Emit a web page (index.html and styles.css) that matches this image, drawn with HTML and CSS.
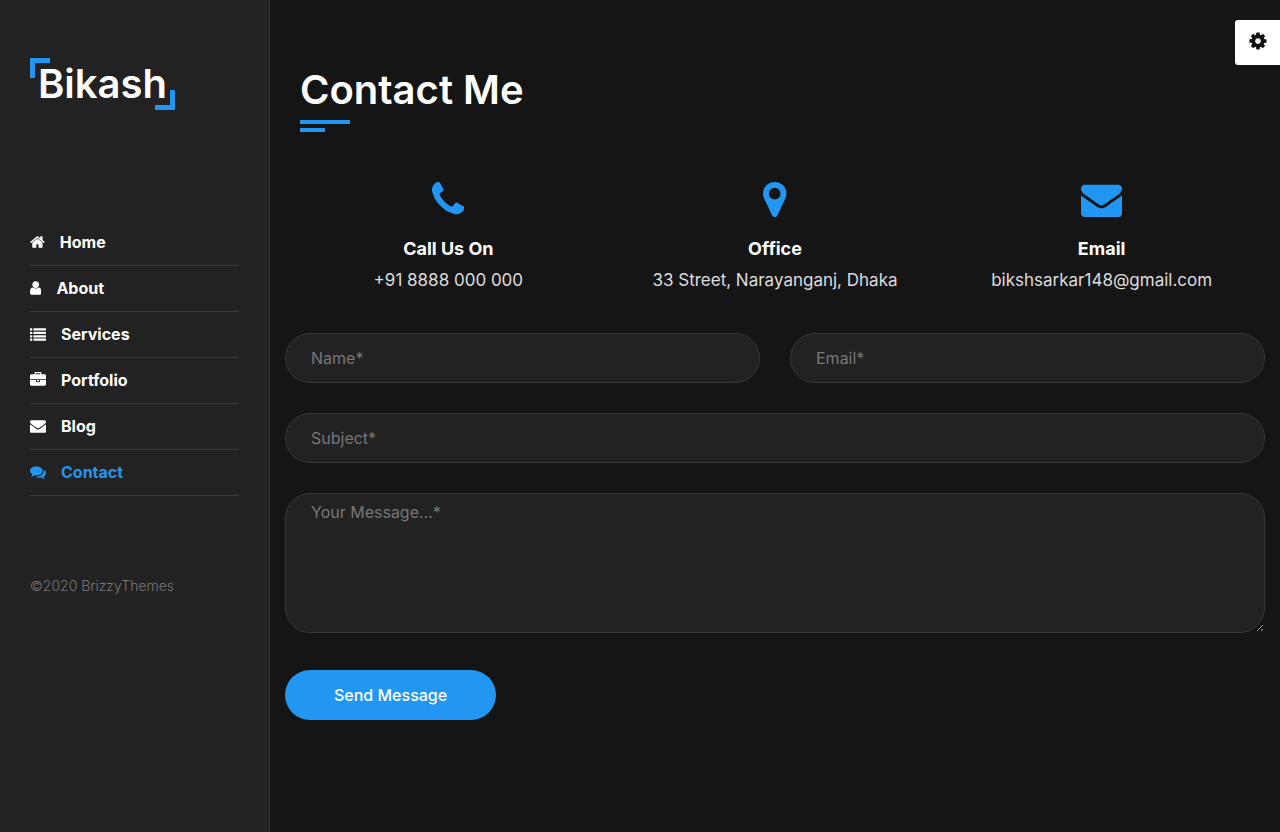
FILE: index.html
```
<!DOCTYPE html>
<html lang="en">
<head>
  <meta charset="UTF-8">
  <meta name="viewport" content="width=device-width, initial-scale=1.0">
  <title>Bikash - Contact</title>
  <link rel="stylesheet" href="styles.css">
</head>
<body>
  <aside class="sidebar">
    <a href="#home" class="logo">Bikash</a>
    <nav>
      <ul class="nav">
        <li><a href="#home"><svg viewBox="64 0 1664 1792" aria-hidden="true"><path d="M1472 992v480q0 26-19 45t-45 19h-384v-384h-256v384h-384q-26 0-45-19t-19-45v-480q0-1 .5-3t.5-3l575-474 575 474q1 2 1 6zm223-69l-62 74q-8 9-21 11h-3q-13 0-21-7l-692-577-692 577q-12 8-24 7-13-2-21-11l-62-74q-8-10-7-23.5t11-21.5l719-599q32-26 76-26t76 26l244 204v-195q0-14 9-23t23-9h192q14 0 23 9t9 23v408l219 182q10 8 11 21.5t-7 23.5z"/></svg>Home</a></li>
        <li><a href="#about"><svg viewBox="256 0 1280 1792" aria-hidden="true"><path d="M1536 1399q0 109-62.500 187t-150.500 78h-854q-88 0-150.500-78t-62.500-187q0-85 8.500-160.500t31.500-152 58.500-131 94-89 134.500-34.500q131 128 313 128t313-128q76 0 134.500 34.500t94 89 58.500 131 31.500 152 8.500 160.500zm-256-887q0 159-112.500 271.500t-271.500 112.500-271.500-112.500-112.500-271.500 112.500-271.500 271.500-112.500 271.500 112.500 112.500 271.500z"/></svg>About</a></li>
        <li><a href="#services"><svg viewBox="0 0 1792 1792" aria-hidden="true"><path d="M32 256h192q32 0 32 32v192q0 32-32 32h-192q-32 0-32-32v-192q0-32 32-32zM416 256h1344q32 0 32 32v192q0 32-32 32h-1344q-32 0-32-32v-192q0-32 32-32zM32 640h192q32 0 32 32v192q0 32-32 32h-192q-32 0-32-32v-192q0-32 32-32zM416 640h1344q32 0 32 32v192q0 32-32 32h-1344q-32 0-32-32v-192q0-32 32-32zM32 1024h192q32 0 32 32v192q0 32-32 32h-192q-32 0-32-32v-192q0-32 32-32zM416 1024h1344q32 0 32 32v192q0 32-32 32h-1344q-32 0-32-32v-192q0-32 32-32zM32 1408h192q32 0 32 32v192q0 32-32 32h-192q-32 0-32-32v-192q0-32 32-32zM416 1408h1344q32 0 32 32v192q0 32-32 32h-1344q-32 0-32-32v-192q0-32 32-32z"/></svg>Services</a></li>
        <li><a href="#portfolio"><svg viewBox="0 0 1792 1792" aria-hidden="true"><path d="M640 256h512v-128h-512v128zm1152 640v480q0 66-47 113t-113 47h-1472q-66 0-113-47t-47-113v-480h672v160q0 26 19 45t45 19h320q26 0 45-19t19-45v-160h672zm-768 0v128h-256v-128h256zm768-480v384h-1792v-384q0-66 47-113t113-47h352v-160q0-40 28-68t68-28h576q40 0 68 28t28 68v160h352q66 0 113 47t47 113z"/></svg>Portfolio</a></li>
        <li><a href="#blog"><svg viewBox="0 0 1792 1792" aria-hidden="true"><path d="M1792 710v794q0 66-47 113t-113 47h-1472q-66 0-113-47t-47-113v-794q44 49 101 87 362 246 497 345 57 42 92.500 65.500t94.500 48 110 24.500h2q51 0 110-24.500t94.500-48 92.500-65.500q170-123 498-345 57-39 100-87zm0-294q0 79-49 151t-122 123q-376 261-468 325-10 7-42.500 31t-54 38.500-52 32.500-57.500 27-50 9h-2q-23 0-50-9t-57.500-27-52-32.500-54-38.500-42.500-31q-91-64-262-182.500t-205-142.500q-62-42-117-115.500t-55-136.500q0-78 41.500-130t118.500-52h1472q65 0 112.500 47t47.500 113z"/></svg>Blog</a></li>
        <li><a href="#contact" class="active"><svg viewBox="0 0 1792 1792" aria-hidden="true"><path d="M1408 768q0 139-94 257t-256.500 186.500-353.500 68.500q-86 0-176-16-124 88-278 128-36 9-86 16h-3q-11 0-20.500-8t-11.500-21q-1-3-1-6.500t.5-6.500 2-6l2.500-5 3.500-5.500 4-5 4.500-5 4-4.500q5-6 23-25t26-29.500 22.500-29 25-38.500 20.500-44q-124-72-195-177t-71-224q0-139 94-257t256.500-186.500 353.500-68.500 353.500 68.500 256.500 186.500 94 257zm384 256q0 120-71 224.500t-195 176.500q10 24 20.500 44t25 38.500 22.500 29 26 29.500 23 25q1 1 4 4.500t4.500 5 4 5 3.500 5.500l2.500 5 2 6 .5 6.500-1 6.500q-3 14-13 22t-22 7q-50-7-86-16-154-40-278-128-90 16-176 16-271 0-472-132 58 4 88 4 161 0 309-45t264-129q125-92 192-212t67-254q0-77-23-152 129 71 204 178t75 230z"/></svg>Contact</a></li>
      </ul>
    </nav>
    <p class="copyright">©2020 BrizzyThemes</p>
  </aside>

  <main class="content" id="contact">
    <h1 class="section-title">Contact Me</h1>

    <div class="info">
      <div class="info-item">
        <svg viewBox="192 0 1408 1792" aria-hidden="true"><path d="M1600 1240q0 27-10 70.500t-21 68.500q-21 50-122 106-94 51-186 51-27 0-52.500-3.500t-57.500-12.500-47.500-14.500-55.500-20.500-49-18q-98-35-175-83-128-79-264.500-215.500t-215.500-264.500q-48-77-83-175-3-9-18-49t-20.500-55.500-14.500-47.500-12.500-57.500-3.500-52.500q0-92 51-186 56-101 106-122 25-11 68.500-21t70.500-10q14 0 21 3 18 6 53 76 11 19 30 54t35 63.500 31 53.500q3 4 17.500 25t21.500 35.500 7 28.500q0 20-28.500 50t-62 55-62 53-28.500 46q0 9 5 22.500t8.500 20.500 14 24 11.500 19q76 137 174 235t235 174q2 1 19 11.500t24 14 20.500 8.500 22.500 5q18 0 46-28.500t53-62 55-62 50-28.500q14 0 28.500 7t35.500 21.500 25 17.500q25 15 53.500 31t63.500 35 54 30q70 35 76 53 3 7 3 21z"/></svg>
        <h2>Call Us On</h2>
        <p>+91 8888 000 000</p>
      </div>
      <div class="info-item">
        <svg viewBox="384 0 1024 1792" aria-hidden="true"><path d="M1152 640q0-106-75-181t-181-75-181 75-75 181 75 181 181 75 181-75 75-181zm256 0q0 109-33 179l-364 774q-16 33-47.500 52t-67.500 19-67.500-19-46.500-52l-365-774q-33-70-33-179 0-212 150-362t362-150 362 150 150 362z"/></svg>
        <h2>Office</h2>
        <p>33 Street, Narayanganj, Dhaka</p>
      </div>
      <div class="info-item">
        <svg viewBox="0 0 1792 1792" aria-hidden="true"><path d="M1792 710v794q0 66-47 113t-113 47h-1472q-66 0-113-47t-47-113v-794q44 49 101 87 362 246 497 345 57 42 92.500 65.500t94.500 48 110 24.500h2q51 0 110-24.500t94.500-48 92.500-65.500q170-123 498-345 57-39 100-87zm0-294q0 79-49 151t-122 123q-376 261-468 325-10 7-42.500 31t-54 38.500-52 32.500-57.500 27-50 9h-2q-23 0-50-9t-57.500-27-52-32.500-54-38.500-42.500-31q-91-64-262-182.500t-205-142.500q-62-42-117-115.500t-55-136.500q0-78 41.500-130t118.500-52h1472q65 0 112.500 47t47.500 113z"/></svg>
        <h2>Email</h2>
        <p>bikshsarkar148@gmail.com</p>
      </div>
    </div>

    <form class="contact-form" method="post">
      <input type="text" name="name" class="form-control" placeholder="Name*" aria-label="Name" required>
      <input type="email" name="email" class="form-control" placeholder="Email*" aria-label="Email" required>
      <input type="text" name="subject" class="form-control wide" placeholder="Subject*" aria-label="Subject" required>
      <textarea name="message" class="form-control wide" placeholder="Your Message...*" aria-label="Your message" required></textarea>
      <button type="submit" class="btn-submit">Send Message</button>
    </form>
  </main>

  <button type="button" class="settings" aria-label="Settings">
    <svg viewBox="0 0 1792 1792" aria-hidden="true"><path d="M1152 896q0-106-75-181t-181-75-181 75-75 181 75 181 181 75 181-75 75-181zm512-109v222q0 12-8 23t-20 13l-185 28q-19 54-39 91 35 50 107 138 10 12 10 25t-9 23q-27 37-99 108t-94 71q-12 0-26-9l-138-108q-44 23-91 38-16 136-29 186-7 28-36 28h-222q-14 0-24.500-8.500t-11.500-21.500l-28-184q-49-16-90-37l-141 107q-10 9-25 9-14 0-25-11-126-114-165-168-7-10-7-23 0-12 8-23 15-21 51-66.500t54-70.500q-27-50-41-99l-183-27q-13-2-21-12.500t-8-23.500v-222q0-12 8-23t19-13l186-28q14-46 39-92-40-57-107-138-10-12-10-24 0-10 9-23 26-36 98.500-107.500t94.500-71.500q13 0 26 10l138 107q44-23 91-38 16-136 29-186 7-28 36-28h222q14 0 24.500 8.500t11.500 21.500l28 184q49 16 90 37l142-107q9-9 24-9 13 0 25 10 129 119 165 170 7 8 7 22 0 12-8 23-15 21-51 66.500t-54 70.500q26 50 41 98l183 28q13 2 21 12.500t8 23.500z"/></svg>
  </button>
</body>
</html>
```

FILE: styles.css
```
:root {
  --font-family: 'Inter', sans-serif;
  --bg: #151515;
  --panel: #222222;
  --border: #393939;
  --accent: #2196f3;
  --text: #ffffff;
  --text-soft: #dddddd;
  --text-muted: #777777;
}
* {
  box-sizing: border-box;
  margin: 0;
  padding: 0;
  font-family: var(--font-family);
}
body {
  display: flex;
  min-height: 100vh;
  background: var(--bg);
  color: var(--text);
  font-size: 16px;
  line-height: 24px;
}
a {
  color: inherit;
  text-decoration: none;
}
svg {
  display: block;
  fill: currentColor;
}

/* sidebar */
.sidebar {
  flex: 0 0 270px;
  padding: 58px 30px 30px;
  background: var(--panel);
  border-right: 1px solid var(--border);
}
.logo {
  position: relative;
  display: inline-block;
  padding: 0 8px;
  font-size: 40px;
  font-weight: 600;
  line-height: 52px;
}
.logo::before,
.logo::after {
  content: "";
  position: absolute;
  box-sizing: border-box;
  width: 20px;
  height: 20px;
  border: 0 solid var(--accent);
}
.logo::before {
  top: 0;
  left: 0;
  border-width: 5px 0 0 5px;
}
.logo::after {
  right: 0;
  bottom: 0;
  border-width: 0 5px 5px 0;
}
.nav {
  margin-top: 110px;
  list-style: none;
}
.nav a {
  display: flex;
  align-items: center;
  gap: 15px;
  height: 46px;
  padding-bottom: 2px;
  border-bottom: 1px solid var(--border);
  font-weight: 700;
}
.nav svg {
  height: 16px;
}
.nav .active {
  color: var(--accent);
}
.copyright {
  margin-top: 78px;
  color: var(--text-muted);
  font-size: 14px;
  font-weight: 300;
}

/* contact section */
.content {
  flex: 1;
  padding: 65px 15px 60px;
}
.section-title {
  display: flex;
  flex-direction: column;
  margin-left: 15px;
  font-size: 40px;
  font-weight: 600;
  line-height: 50px;
}
.section-title::before,
.section-title::after {
  content: "";
  height: 4px;
  background: var(--accent);
}
.section-title::before {
  order: 1;
  width: 50px;
  margin-top: 5px;
}
.section-title::after {
  order: 2;
  width: 25px;
  margin-top: 4px;
}
.info {
  display: grid;
  grid-template-columns: repeat(3, 1fr);
  margin: 47px 0 41px;
  text-align: center;
}
.info-item svg {
  height: 41px;
  margin: 0 auto 17px;
  color: var(--accent);
}
.info-item h2 {
  margin-bottom: 7px;
  font-size: 18px;
  font-weight: 700;
  line-height: 24px;
}
.info-item p {
  color: var(--text-soft);
  font-size: 17px;
}
.contact-form {
  display: grid;
  grid-template-columns: 1fr 1fr;
  gap: 30px;
}
.form-control {
  width: 100%;
  height: 50px;
  padding: 6px 25px;
  background: var(--panel);
  border: 1px solid var(--border);
  border-radius: 25px;
  color: var(--text);
  font-size: 16px;
  line-height: 24px;
}
.form-control::placeholder {
  color: var(--text-muted);
}
.form-control:focus {
  outline: none;
  border-color: var(--accent);
}
.wide {
  grid-column: 1 / -1;
}
textarea.form-control {
  display: block;
  height: 140px;
  resize: vertical;
}
.btn-submit {
  justify-self: start;
  height: 50px;
  margin-top: 7px;
  padding: 0 49px;
  background: var(--accent);
  border: none;
  border-radius: 25px;
  color: var(--text);
  font-size: 16px;
  font-weight: 500;
  cursor: pointer;
}

/* settings toggle pinned to the right edge */
.settings {
  position: fixed;
  top: 20px;
  right: 0;
  display: flex;
  align-items: center;
  justify-content: center;
  width: 45px;
  height: 45px;
  padding-bottom: 4px;
  background: #ffffff;
  border: none;
  border-radius: 3px 0 0 3px;
  color: #111111;
  cursor: pointer;
}
.settings svg {
  height: 20px;
}
```
